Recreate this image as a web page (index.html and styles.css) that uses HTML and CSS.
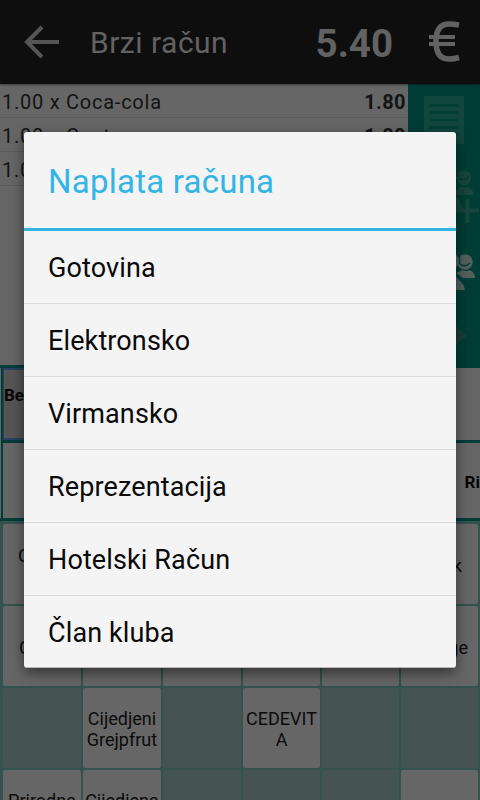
FILE: index.html
```html
<!DOCTYPE html>
<html lang="hr">
<head>
<meta charset="utf-8">
<title>Brzi račun</title>
<link rel="stylesheet" href="styles.css">
</head>
<body>
<div class="app">
  <header class="bar">
    <svg class="back" width="36" height="34" viewBox="0 0 36 34"><path d="M18 2 3 17l15 15M4 17h31" fill="none" stroke="#555" stroke-width="4"/></svg>
    <h1 class="bar-title">Brzi račun</h1>
    <span class="total">5.40</span>
    <svg class="euro" width="32" height="42" viewBox="0 0 32 42"><path d="M30 4.200Q25 3 20 3C11 3 7 9 7 20.500S11 38 20 38q5 0 10-1.500" fill="none" stroke="#626262" stroke-width="5.500"/><path d="M0 16h26M0 23h26" stroke="#626262" stroke-width="4"/></svg>
  </header>
  <section class="bill">
    <ul class="lines">
      <li class="line"><span>1.00 x Coca-cola</span><b>1.80</b></li>
      <li class="line"><span>1.00 x Cocta</span><b>1.80</b></li>
      <li class="line"><span>1.00</span></li>
    </ul>
    <svg class="tools" width="72" height="284" viewBox="0 0 72 284">
      <path d="M16 12h40v48H16z" fill="#124740"/>
      <path d="M21 21.500h30M21 28.500h30M21 36h30M21 43.500h30M21 50h30" stroke="#003e36" stroke-width="2.500"/>
      <g fill="#17453f"><circle cx="56" cy="94" r="7.500"/><path d="M46 108l7-6q4 3 8 1 4 2 5 8H49z"/><path d="M40 128q4-20 10-14 3 4 5 14z"/></g>
      <path d="M50 93v-6M51 94q5 4 10-1" stroke="#003e36" stroke-width="1.500" fill="none"/>
      <path d="M59.500 115v24M48 126.500h23" stroke="#17453f" stroke-width="4"/>
      <g fill="#53605c"><circle cx="43" cy="177" r="8"/><circle cx="57" cy="178" r="7.800"/><path d="M48 189l6-3q4 2 8 0 5 3 5 8H55z"/><path d="M35 206q8-22 16-10 5 4 6 10z"/></g>
      <path d="M51.500 180v-9M52 180q5 4 10-1" stroke="#003e36" stroke-width="1.500" fill="none"/>
      <path d="M46 240 59 251.500 46 263z" fill="#173f3b"/>
    </svg>
  </section>
  <section class="cats">
    <div class="cat cat-active">Bez</div>
    <div class="cat cat-second"><span>Ri</span></div>
  </section>
  <section class="grid">
    <div class="cell cell-left cell-raised">Co</div><div class="cell"></div><div class="cell"></div><div class="cell"></div><div class="cell"></div><div class="cell cell-right cell-k">ak</div>
    <div class="cell cell-left">Co</div><div class="cell"></div><div class="cell"></div><div class="cell"></div><div class="cell"></div><div class="cell cell-right">ge</div>
    <div class="cell off"></div><div class="cell">Cijedjeni<br>Grejpfrut</div><div class="cell off"></div><div class="cell">CEDEVIT<br>A</div><div class="cell off"></div><div class="cell off"></div>
    <div class="cell cell-last">Prirodna</div><div class="cell cell-last">Cijedjena</div><div class="cell off"></div><div class="cell off"></div><div class="cell off"></div><div class="cell"></div>
  </section>
  <div class="dialog" role="dialog">
    <h2 class="dialog-title"><span>Naplata računa</span></h2>
    <ul class="options">
      <li>Gotovina</li>
      <li>Elektronsko</li>
      <li>Virmansko</li>
      <li>Reprezentacija</li>
      <li>Hotelski Račun</li>
      <li>Član kluba</li>
    </ul>
  </div>
</div>
</body>
</html>
```
FILE: styles.css
```css
* { box-sizing: border-box; }
body, h1, h2, ul { margin: 0; padding: 0; }
ul { list-style: none; }
body { font-family: Roboto, sans-serif; background: #666; }
.app { position: relative; width: 480px; height: 800px; overflow: hidden; }

.bar { position: relative; display: flex; align-items: center; height: 84px; padding: 0 19px 0 24px; background: #0e0e0e; color: #626262; box-shadow: 0 1px 2px rgba(0,0,0,.4); }
.bar-title { flex: 1; margin-left: 30px; font-size: 30px; font-weight: 400; letter-spacing: .5px; }
.total { margin-right: 36px; padding-top: 2px; font-size: 38.5px; font-weight: 700; }

.bill { display: flex; height: 284px; }
.lines { flex: 1; background: #666; }
.line { display: flex; justify-content: space-between; height: 34px; padding: 0 2px; line-height: 36px; font-size: 20px; letter-spacing: .75px; color: #141414; border-bottom: 1px solid #5b5b5b; }
.line b { letter-spacing: .4px; }
.tools { display: block; background: #003d36; }

.cats { position: relative; height: 156px; margin-top: -3px; padding-left: 3px; border-top: 3px solid #003d36; border-bottom: 3px solid #003d36; background: linear-gradient(90deg, #666 1px, #003d36 1px 3px, #666 3px); font-size: 17px; font-weight: 700; color: #060606; }
.cat-active { width: 160px; height: 72px; padding: 15px 0; line-height: 20px; border: 2px solid #29425f; border-left-width: 1px; background: #555; }
.cat-second { display: flex; justify-content: flex-end; height: 78px; border-top: 3px solid #003d36; line-height: 78px; }

.grid { display: grid; grid-template-columns: repeat(3, 78px) 77px 77px 77px; grid-auto-rows: 80px; gap: 2px; height: 279px; padding: 3px 2px 0 3px; background: #34524e; }
.cell { display: flex; align-items: center; justify-content: center; text-align: center; background: #666; border-radius: 2px; font-size: 18px; line-height: 21px; color: #0b0b0b; overflow: hidden; padding-top: 2px; }
.cell-left { justify-content: flex-start; padding-left: 16px; }
.cell-raised { align-items: flex-start; padding-top: 21px; padding-left: 15px; }
.cell-right { justify-content: flex-end; padding-right: 10px; }
.cell-k { padding-right: 16px; }
.cell-last { align-items: flex-start; padding-top: 20px; }
.off { background: #455452; }

.dialog { position: absolute; left: 24px; top: 132px; width: 432px; height: 536px; background: #f4f4f4; border-radius: 3px; border-bottom: 1px solid #bbb; box-shadow: 0 5px 14px rgba(0,0,0,.5); overflow: hidden; }
.dialog-title { height: 99px; padding-left: 24px; border-bottom: 3px solid #33b5e5; color: #33b5e5; font-size: 33px; font-weight: 400; line-height: 99px; letter-spacing: .23px; }
.options li { height: 73px; padding-left: 24px; line-height: 74px; font-size: 27px; letter-spacing: .12px; color: #0a0a0a; border-bottom: 1px solid #d8d8d8; }
.options li:last-child { border: 0; }
```
